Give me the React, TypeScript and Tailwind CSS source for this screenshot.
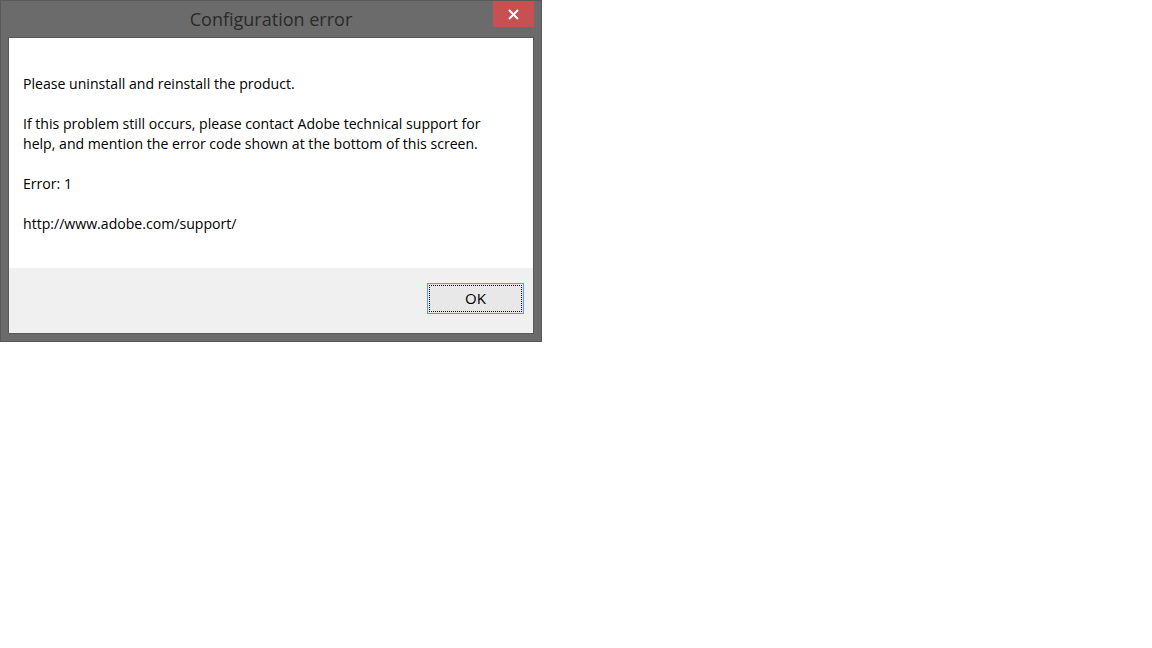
export default function App() {
  return (
    <div className="w-[1152px] h-[648px] bg-white" style={{ fontFamily: '"Open Sans", "Noto Sans", sans-serif' }}>
      {/* Window frame */}
      <div className="relative w-[542px] h-[342px] bg-[#6b6b6b] border border-[#595959] flex flex-col">
        {/* Title bar */}
        <div className="h-[36px] flex items-center justify-center">
          <span className="text-[18px] text-[#2a2a2a] leading-none">Configuration error</span>
        </div>
        <button className="absolute top-0 right-[7px] w-[41px] h-[26px] bg-[#c75050] flex items-center justify-center">
          <svg width="11" height="11" viewBox="0 0 11 11">
            <path d="M1 1 L10 10 M10 1 L1 10" stroke="white" strokeWidth="2" />
          </svg>
        </button>

        {/* Client area */}
        <div className="mx-[7px] border border-[#595959] flex flex-col">
          <div className="h-[230px] bg-white pl-[14px] pt-[36px] text-[14.1px] leading-[20px] text-black">
            <p>Please uninstall and reinstall the product.</p>
            <p className="mt-[20px]">
              If this problem still occurs, please contact Adobe technical support for
              <br />
              help, and mention the error code shown at the bottom of this screen.
            </p>
            <p className="mt-[20px]">Error: 1</p>
            <p className="mt-[20px]">http://www.adobe.com/support/</p>
          </div>
          <div className="h-[65px] bg-[#f0f0f0] flex justify-end items-start pt-[15px] pr-[9px]">
            <button className="w-[97px] h-[31px] shrink-0 border border-[#569de5] bg-[#e8e8e8] p-[1px]">
              <div className="w-full h-full border border-dotted border-black flex items-center justify-center text-[15px] text-black">
                OK
              </div>
            </button>
          </div>
        </div>
      </div>
    </div>
  );
}
